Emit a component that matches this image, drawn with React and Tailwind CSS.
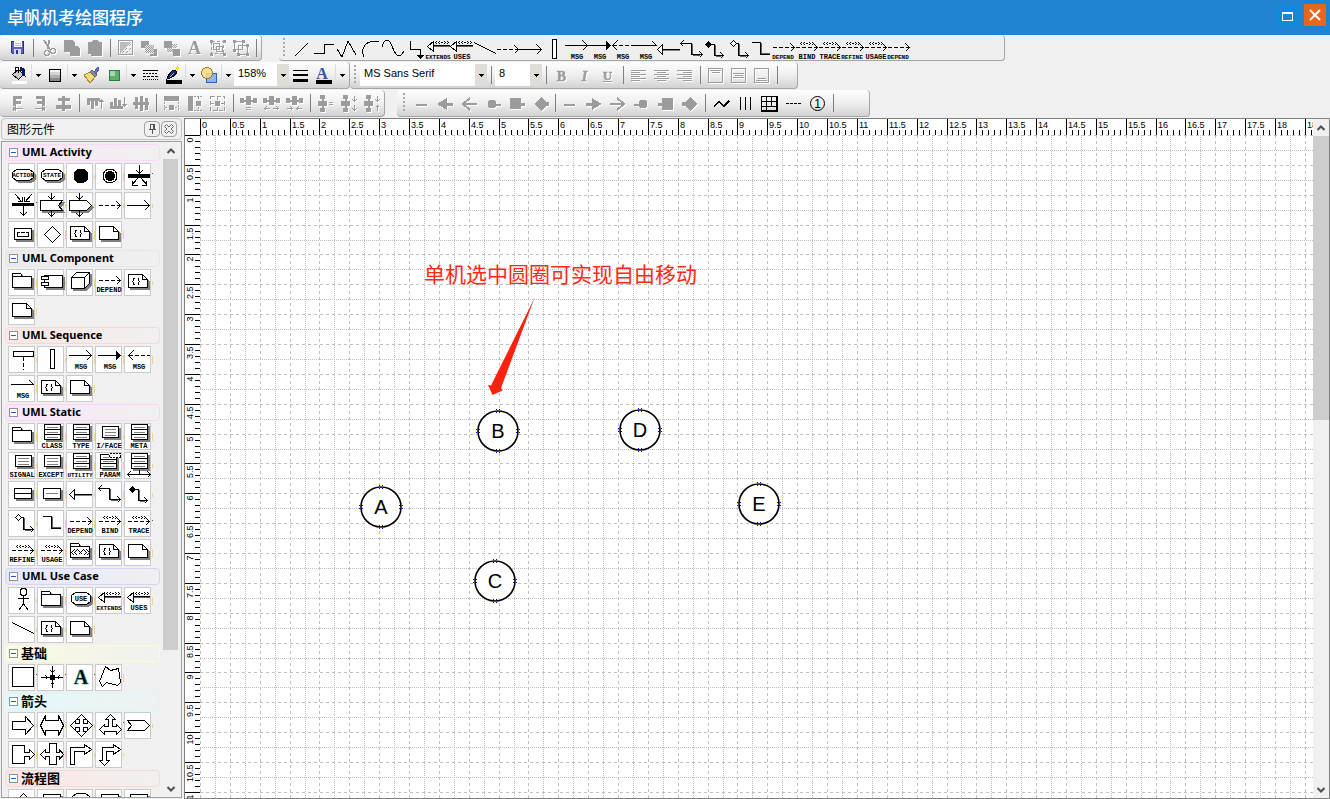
import React, { useLayoutEffect, useRef, useState } from "react";

const SHADOW = "#808080";
const UNIT = 59.72;

/* ---------- shape glyphs, drawn on a 25 x 25 field ---------- */

function Label({ children, y = 22, small }) {
  return (
    <text
      x={children.length > 5 && !small ? 13 : 14}
      y={y}
      textAnchor="middle"
      stroke="none"
      fill="#000"
      data-long={children.length > 5}
      className={
        children.length > 6 || small
          ? "font-['Liberation_Mono',monospace] text-[6px] font-bold"
          : "font-['Liberation_Mono',monospace] text-[7px] font-bold"
      }
    >
      {children}
    </text>
  );
}

function Shaded({ d }) {
  return (
    <>
      <path d={d} transform="translate(2 2)" fill={SHADOW} stroke={SHADOW} />
      <path d={d} fill="#fff" />
    </>
  );
}

const NOTE = "M3.5 4.5h14l5 5v8h-19z";
const note = (
  <>
    <Shaded d={NOTE} />
    <path d="M17.5 4.5v5h5" />
  </>
);
const noteBraces = (
  <>
    <Shaded d={NOTE} />
    <path d="M17.5 4.5v5h5M9.5 8.5h-1v2l-1 1 1 1v2h1M12.5 8.5h1v2l1 1-1 1v2h-1" />
  </>
);
const folder = (
  <>
    <Shaded d="M3.5 6.5v-3h8l2 3h9v11h-19z" />
    <path d="M3.5 6.5h10" />
  </>
);
const pill = "M7.5 5.5h13l4 3v5l-4 3h-13l-4-3v-5z";
const tallBox = (
  <>
    <Shaded d="M6.5 .5h16v15h-16z" />
    <path d="M6.5 5.5h16M6.5 10.5h16" />
    <path d="M9 3.5h11M9 8.5h11M9 13.5h11" stroke={SHADOW} />
  </>
);
const shortBox = (
  <>
    <Shaded d="M6.5 2.5h16v11h-16z" />
    <path d="M9 5.5h11M9 8.5h11M9 11.5h11" stroke={SHADOW} />
  </>
);

/* guillemets around a dash, dotted out one pixel at a time */
function Quill({ x, y }) {
  const dots = [[0, 1], [1, 0], [1, 2], [3, 1], [4, 0], [4, 2], [6, 1], [7, 1], [9, 0], [9, 2], [10, 1], [12, 0], [12, 2], [13, 1]];
  return <path stroke="none" fill="#000" d={dots.map(([a, b]) => `M${x + a} ${y + b}h1v1h-1z`).join("")} />;
}

const dashArrow = (y, head) => (
  <>
    <path d={`M3 ${y}h21`} strokeDasharray="4 2" />
    <path d={`M${24.5 - head} ${y - head}l${head} ${head}-${head} ${head}`} />
  </>
);
const solidArrow = (y) => <path d={`M2 ${y}h22M19.5 ${y - 5}l5 5-5 5`} />;
const quillArrow = (
  <>
    {dashArrow(10.5, 4)}
    <Quill x={7} y={5} />
  </>
);
const hollowLeft = (
  <>
    <path d="M8.5 8.5H25" />
    <path d="M8.5 9.5H25" stroke="#606060" />
    <path d="M2.5 9.5l6-5v10z" fill="#fff" />
    <Quill x={10} y={4} />
  </>
);

const GLYPHS = {
  action: (<><Shaded d={pill} /><Label small y={13}>ACTION</Label></>),
  state: (<><Shaded d={pill} /><Label small y={13}>STATE</Label></>),
  start: <circle cx="14" cy="12" r="7" fill="#000" />,
  end: (<><circle cx="14" cy="12" r="7" fill="#fff" /><circle cx="14" cy="12" r="5" fill="#000" stroke="none" /></>),
  fork: (<><path d="M3 10h22v4H3z" fill="#000" stroke="none" /><path d="M14.5 1v9M11.500 6.500l3 3 3-3M13 14l-6 7M7.500 16.500v5h5M16 14l6 7M21.500 16.500v5h-5" /></>),
  join: (<><path d="M3 10h22v3H3z" fill="#000" stroke="none" /><path d="M6 1l7 8M8.5 8.5h5v-5M23 1l-7 8M20.5 8.5h-5v-5M14.5 13v9M11.5 19.500l3 3 3-3" /></>),
  receive: (<><Shaded d="M2.5 7.5h22l-4 5 4 5h-22z" /><path d="M13.5 0v7M10.5 3.500l3 3 3-3M13.5 18v5M10.5 20.500l3 3 3-3" /></>),
  send: (<><Shaded d="M2.5 7.5h17l5 5-5 5h-17z" /><path d="M12.5 0v7M9.5 3.500l3 3 3-3M12.5 18v5M9.5 20.500l3 3 3-3" /></>),
  dashArrow: dashArrow(12.5, 4),
  solidArrow: solidArrow(12.5),
  lane: (<><Shaded d="M5.5 6.5h17v11h-17z" /><path d="M8.5 11v3.500h11V11M8 10.5h3M12 10.500h4M17 10.500h3" /></>),
  decision: <path d="M14.5 4.500l8 8-8 8-8-8z" fill="#fff" />,
  noteBraces,
  note,
  folder,
  component: (<><Shaded d="M6.5 5.5h18v12h-18z" /><path d="M3.5 6.5h7v3h-7zM3.500 12.5h7v3h-7z" fill="#fff" /></>),
  cube: (<><Shaded d="M4.5 7.5l5-5h13v11l-5 5h-13z" /><path d="M4.500 7.500h13v11M17.500 7.500l5-5" /></>),
  depend: (<>{dashArrow(10.5, 4)}<Label>DEPEND</Label></>),
  lifeline: (<><path d="M4.500 4.500h20v5h-20z" fill="#fff" /><path d="M14.500 10v13" strokeDasharray="4 2" /></>),
  activation: <path d="M12.500 2.500h4v19h-4z" fill="#fff" />,
  msg: (<>{solidArrow(8.5)}<Label>MSG</Label></>),
  msgFilled: (<><path d="M2 8.500h19" /><path d="M20.500 4.500l4 4-4 4z" fill="#000" /><Label>MSG</Label></>),
  msgBack: (<><path d="M4 8.500h21" strokeDasharray="4 2" /><path d="M8.500 3.500l-5 5 5 5" /><Label>MSG</Label></>),
  msgHalf: (<><path d="M2 8.500h22.500l-4-4" /><Label>MSG</Label></>),
  class: (<>{tallBox}<Label y={24}>CLASS</Label></>),
  type: (<>{tallBox}<Label y={24}>TYPE</Label></>),
  iface: (<>{shortBox}<Label y={24}>I/FACE</Label></>),
  meta: (<>{tallBox}<Label y={24}>META</Label></>),
  signal: (<>{shortBox}<Label y={24}>SIGNAL</Label></>),
  except: (<>{shortBox}<Label y={24}>EXCEPT</Label></>),
  utility: (<>{tallBox}<Label y={24}>UTILITY</Label></>),
  param: (<><Shaded d="M4.500 1.500h16v14h-16z" /><path d="M4.500 6.500h16M4.500 10.500h16" /><path d="M7 4.500h6M7 8.500h11M7 13.500h11" stroke={SHADOW} /><path d="M13.500 .5h11v4h-11z" fill="#fff" stroke="#fff" /><path d="M13.500 .5h11v4h-11z" strokeDasharray="2 1" /><Label y={24}>PARAM</Label></>),
  assocClass: (<>{tallBox}<path d="M14.500 17v4M3 21.500h22M5.500 18.500l-3 3 3 3M22.500 18.500l3 3-3 3" /></>),
  object: (<><Shaded d="M5.500 6.500h17v10h-17z" /><path d="M5.500 11.500h17" /></>),
  instance: (<><Shaded d="M5.500 6.500h17v10h-17z" /><path d="M8 11.500h12" stroke={SHADOW} /></>),
  generalize: (<><path d="M7 12.500h18" /><path d="M8 13.500h17" stroke={SHADOW} /><path d="M2.500 12.500l5-5v10z" fill="#fff" /></>),
  elbowBoth: (<><path d="M3 6.500h10.500v11H25M5.500 3.500l-3 3 3 3M21.500 14.500l3 3-3 3" /><path d="M14.500 7v10M15 18.500h7" stroke="#606060" /></>),
  elbowDiamond: (<><path d="M8 7.500h5.500v11H22M19.500 15.500l3 3-3 3" /><path d="M14.500 8v10M15 19.500h5" stroke="#606060" /><path d="M4.500 7.500l3-3 3 3-3 3z" fill="#000" /></>),
  elbowHollow: (<><path d="M9 6.500h5.500v12H24M21.500 15.500l3 3-3 3" /><path d="M15.500 7v11M16 19.500h6" stroke="#606060" /><path d="M6.500 6.500l3-3 3 3-3 3z" fill="#fff" /></>),
  elbow: (<><path d="M5 5.500h8.500v12H23" /><path d="M14.500 6v11M15 16.500h8" stroke="#606060" /></>),
  bind: (<>{quillArrow}<Label>BIND</Label></>),
  trace: (<>{quillArrow}<Label>TRACE</Label></>),
  refine: (<>{quillArrow}<Label>REFINE</Label></>),
  usage: (<>{quillArrow}<Label>USAGE</Label></>),
  package: (<>{folder}<path d="M7.500 9.500l-3 3 3 3M10.500 9.500l-3 3 3 3M11.500 10.500l4 4M15.500 10.500l-4 4M16.500 9.500l3 3-3 3M19.500 9.500l3 3-3 3" /></>),
  actor: (<><circle cx="14.500" cy="4" r="3.500" fill="#fff" /><path d="M14.500 8v8M9 10.500h11M14.500 16l-5 6.500M14.500 16l5 6.500" /></>),
  use: (<><Shaded d="M8.500 4.500h11l4 3v6l-4 3h-11l-4-3v-6z" /><Label y={13}>USE</Label></>),
  extends: (<>{hollowLeft}<Label>EXTENDS</Label></>),
  uses: (<>{hollowLeft}<Label>USES</Label></>),
  slope: <path d="M3 5.500l22 11" />,
  box: <path d="M3.500 2.500h21v19h-21z" fill="#fff" />,
  hub: (<><path d="M3 12.500h22M14.500 1v22M7.500 10.500l2 2-2 2M21.500 10.500l-2 2 2 2M12.500 5.500l2 2 2-2M12.500 19.500l2-2 2 2" /><circle cx="14.500" cy="12.500" r="2.500" fill="#000" /></>),
  letter: (<text x="14" y="19" textAnchor="middle" stroke="#008080" strokeWidth=".5" fill="#000" className="font-['Liberation_Serif',serif] text-[20px] font-bold">A</text>),
  freeform: <path d="M9.500 1.500l5 4 8-2 2 14-3 3-11-3-4 4-3-5z" fill="#fff" />,
  arrowRight: <path d="M3.500 8.500h13v-5l8 9-8 9v-5h-13z" />,
  arrowBoth: <path d="M2.500 12.500l5-10v5h13v-5l5 10-5 10v-5h-13v5z" />,
  arrowFour: <path d="M14.500 1.500l5 5h-3v4h4v-3l5 5-5 5v-3h-4v4h3l-5 5-5-5h3v-4h-4v3l-5-5 5-5v3h4v-4h-3z" />,
  arrowThree: <path d="M14.500 1.500l5 5h-3v7h4v-2l5 5-5 5v-3h-12v3l-5-5 5-5v2h4v-7h-3z" />,
  chevron: <path d="M2.500 7.500h17l5 5-5 5h-17l4-5z" />,
  callRight: <path d="M3.500 3.500h12v7h5v-3l5 5-5 5v-3h-5v7h-12z" />,
  callBoth: <path d="M11.500 1.500h7v9h3v-3l4 5-4 5v-3h-3v8h-7v-8h-4v3l-5-5 5-5v3h4z" />,
  bendRight: <path d="M3.500 22.500v-17h14v-3l7 5-7 5v-3h-10v13z" />,
  bendBoth: <path d="M6.500 5.500h11v-3l7 5-7 5v-3h-7v9h3l-5 5-5-5h3z" />,
  flowDiamond: <path d="M14.500 3.500l9 9-9 9-9-9z" />,
  flowBox: <Shaded d="M5.500 4.500h17v13h-17z" />,
  flowRound: <Shaded d="M9.500 3.500h9l4 3v8l-4 3h-9l-4-3v-8z" />,
  line: <path d="M7.500 19.500l13-13" />,
  step: <path d="M4 16.500h10.500v-9H24" />,
  zigzag: <path d="M4 12l5 8 6-16 8 14" />,
  arc: <path d="M8 20C4 11 10 2 23 5" />,
  wave: <path d="M3 10C5 1 10 1 13 9S20 24 25 14" />,
  elbowDown: (<><path d="M8.500 4v8.500h10V21" /><path d="M15.500 18.500h6l-3 3z" fill="#000" /></>),
};

function Glyph({ name, toolbar }) {
  return (
    <svg
      viewBox={toolbar ? "2 0 23 25" : "0 0 25 25"}
      className={
        toolbar
          ? "h-[25px] w-[23px] overflow-visible [&_text[data-long=true]]:text-[6px]"
          : "h-[25px] w-[25px] overflow-visible"
      }
      fill="none"
      stroke="#000"
      shapeRendering="crispEdges"
      aria-hidden="true"
    >
      {GLYPHS[name]}
    </svg>
  );
}

/* ---------- command icons, drawn on a 23 x 23 field ---------- */

const G = "#9c9c9c";

const distribute = (flip) => (
  <g transform={flip ? "matrix(0 1 1 0 0 0)" : undefined} stroke="none" fill={G}>
    <path d="M3 6h4v5H3zM9 4h5v9H9zM16 6h4v5h-4zM3 8h16v2H3z" />
  </g>
);

const ICONS = {
  save: (<><path d="M5.500 5.500h12v12h-11l-1-1z" fill="#5b63c4" stroke="#2d2f8f" /><path d="M8 5h8v6H8z" fill="#fff" stroke="none" /><path d="M9 7.500h6M9 9.500h6" stroke="#b8b8c8" /><path d="M8 13h7v5H8z" fill="#d6d8ee" stroke="none" /><path d="M10 14h2v4h-2z" fill="#2d2f8f" stroke="none" /></>),
  cut: (<><path d="M7 4l6 10M12 4l-1 9" strokeWidth="2" /><circle cx="10" cy="17" r="2.500" strokeWidth="1.500" /><circle cx="16" cy="15" r="2.500" strokeWidth="1.500" /></>),
  copy: <path d="M4 4h8l3 3v3h2l3 3v7H10v-4H4z" fill={G} stroke="none" />,
  paste: <path d="M5 6h3l2-2h4l2 2h3v14H8v-2H5z" fill={G} stroke="none" />,
  picture: (<><path d="M4.500 4.500h14v14h-14z" strokeWidth="1.500" /><path d="M6 6h11L6 17z" fill={G} fillOpacity=".65" stroke="none" /><path d="M8 17l9-9M12 17l5-5" strokeDasharray="1 1" /></>),
  front: (<><path d="M4 5h8v7H4zM13 13h7v7h-7z" fill={G} stroke="none" /><path d="M8 9h9v9H8z" fill="#e8e8e8" stroke="none" /><path d="M8 9.500h9M9 10.500h8M8 11.500h9M9 12.500h8M8 13.500h9M9 14.500h8M8 15.500h9M9 16.500h8" strokeDasharray="1 1" /></>),
  back: (<><path d="M4 5h8v7H4zM13 13h7v7h-7z" fill={G} stroke="none" /><path d="M12 8.500h5M13 9.500h4M12 10.500h5M13 11.500h4M7 12.500h5M8 13.500h5M7 14.500h5M8 15.500h5" strokeDasharray="1 1" /></>),
  text: (<text x="11.5" y="18" textAnchor="middle" fill={G} stroke="none" className="font-['Liberation_Serif',serif] text-[18px] font-bold">A</text>),
  group: (<><path d="M5.500 5.500h12v12h-12z" strokeDasharray="3 2" /><path d="M7.500 7.500h6v6h-6zM10.500 10.500h6v5h-6z" /><path d="M4 4h3v3H4zM17 4h3v3h-3zM4 17h3v3H4zM17 17h3v3h-3z" fill={G} stroke="none" /></>),
  ungroup: (<><path d="M5.500 5.500h8v8h-8zM9.500 9.500h9v9h-9z" /><path d="M4 4h3v3H4zM13 4h3v3h-3zM4 13h3v3H4zM8 17h3v3H8zM17 17h3v3h-3zM17 8h3v3h-3z" fill={G} stroke="none" /></>),
  fill: (<><path d="M4.500 10.500l6-5 5 5-5 5z" fill="#c8c8c8" stroke="#000" /><path d="M7.500 8V3.500h3V9" stroke="#000" /><path d="M12 4c4-1 5 2 5 8l-2-1c0-3-1-5-3-5z" fill="#0a1a6a" stroke="#0a1a6a" /><path d="M4 17h15v3H4z" fill="#fff" stroke="none" /></>),
  gradient: (<><path d="M6 5h11v3H6z" fill="#f6f6f6" stroke="none" /><path d="M6 8h11v3H6z" fill="#d4d4d4" stroke="none" /><path d="M6 11h11v3H6z" fill="#b0b0b0" stroke="none" /><path d="M6 14h11v4H6z" fill="#888" stroke="none" /><path d="M5.500 5.500h11v12h-11z" stroke="#000" /></>),
  brush: (<><path d="M4 11l6-3 5 5-5 6z" fill="#f3dc80" stroke="#a88a3a" /><path d="M10 8l2-2 5 5-2 2z" fill="#8a8a98" stroke="#666" /><path d="M14 8l4-5 1 2-3 5z" fill="#7080c8" stroke="#505aa0" /></>),
  swatch: (<><path d="M6.500 6.500h10v10h-10z" fill="#5fae6a" stroke="#2c7a3c" /><path d="M7 7h5v5H7z" fill="#a4d8a8" stroke="none" /></>),
  dashes: (<><path d="M4 6.500h15" stroke="#000" /><path d="M4 9.500h15" stroke="#000" strokeDasharray="2 1" /><path d="M4 12.500h15" stroke="#000" strokeDasharray="3 1" /><path d="M4 15.500h15" stroke="#000" strokeDasharray="1 1" /></>),
  pen: (<><path d="M5 15c2-6 5-9 8-9l2 2c-2 4-5 6-10 7z" fill="#1a2a7a" stroke="#000" /><path d="M8 13l4-4" stroke="#a0b0e0" /><path d="M13 6l2-4 2 1-1 4z" fill="#f4e400" stroke="none" /><path d="M4 16h16v4H4z" fill="#000" stroke="none" /></>),
  shapes: (<><path d="M8.500 9.500h10v9h-10z" fill="#8bb6f2" stroke="#2d62b8" /><circle cx="9" cy="9" r="5.500" fill="#f6dc85" fillOpacity=".85" stroke="#a07a20" /></>),
  weights: (<><path d="M4 6.500h15" stroke="#000" /><path d="M4 11h15" stroke="#000" strokeWidth="2" /><path d="M4 16.500h15" stroke="#000" strokeWidth="3" /></>),
  fontColor: (<><text x="10" y="15" textAnchor="middle" fill="#35549c" stroke="none" className="font-['Liberation_Serif',serif] text-[16px] font-bold">A</text><path d="M4 16h16v4H4z" fill="#000" stroke="none" /></>),
  bold: (<text x="11.5" y="17" textAnchor="middle" fill={G} stroke={G} strokeWidth=".5" className="font-['Liberation_Serif',serif] text-[14px] font-bold">B</text>),
  italic: (<text x="11.5" y="17" textAnchor="middle" fill={G} stroke={G} strokeWidth=".5" className="font-['Liberation_Serif',serif] text-[14px] font-bold italic">I</text>),
  underline: (<><text x="11.500" y="16" textAnchor="middle" fill={G} stroke={G} strokeWidth=".5" className="font-['Liberation_Serif',serif] text-[13px] font-bold">U</text><path d="M7 17.500h9" /></>),
  textLeft: <path d="M4 6.500h15M4 8.500h9M4 10.500h15M4 12.500h9M4 14.500h15M4 16.500h9" />,
  textCenter: <path d="M4 6.500h15M7 8.500h9M4 10.500h15M7 12.500h9M4 14.500h15M7 16.500h9" />,
  textRight: <path d="M4 6.500h15M10 8.500h9M4 10.500h15M10 12.500h9M4 14.500h15M10 16.500h9" />,
  boxTop: <path d="M4.500 4.500h14v14h-14zM6 6.500h11M8 8.500h8" />,
  boxMiddle: <path d="M4.500 4.500h14v14h-14zM6 9.500h11M8 11.500h8M6 13.500h11" />,
  boxBottom: <path d="M4.500 4.500h14v14h-14zM8 14.500h8M6 16.500h11" />,
  alignLeft: (<><path d="M7 4h9v3h-6v2h5v3h-5v2H7z" fill={G} stroke="none" /><path d="M7.500 15v4M8 16.500h9M10 14.500l-2 2 2 2" /></>),
  alignRight: (<><path d="M16 4H7v3h6v2H8v3h5v2h3z" fill={G} stroke="none" /><path d="M15.500 15v4M6 16.500h9M13 14.500l2 2-2 2" /></>),
  alignCenter: <path d="M10 4h3v2h5v3h-5v4h6v4h-6v2h-3v-2H4v-4h6V9H6V6h4z" fill={G} stroke="none" />,
  alignTop: (<><path d="M4 6h13v3h-2v5h-3V9h-1v8H8V9H7v4H4z" fill={G} stroke="none" /><path d="M18.500 8v9M16.500 10l2-2 2 2" /></>),
  alignBottom: (<><path d="M4 17h13v-3h-2V8h-3v6h-1V6H8v8H7v-4H4z" fill={G} stroke="none" /><path d="M18.500 5v9M16.500 12l2 2 2-2" /></>),
  alignMiddle: <path d="M4 10h2V5h3v5h2V4h3v6h2V6h3v4h1v3h-1v5h-3v-5h-2v6h-3v-6H9v4H6v-4H4z" fill={G} stroke="none" />,
  sameWidth: (<><path d="M4 4h15v5H4zM9 13h5v5H9z" fill={G} stroke="none" /><path d="M4.500 10v8M18.500 10v8M5 15.500h3M15 15.500h3" strokeDasharray="2 1" /></>),
  sameHeight: (<><path d="M5 4h5v15H5zM13 9h5v5h-5z" fill={G} stroke="none" /><path d="M11 4.500h8M11 18.500h8M15.500 5v3M15.500 15v3" strokeDasharray="2 1" /></>),
  sameSize: (<><path d="M4.500 4.500h14v14h-14z" strokeDasharray="4 2" /><path d="M9 9h5v5H9z" fill={G} stroke="none" /><path d="M11.500 4v4M11.500 15v4M4 11.500h4M15 11.500h4" /></>),
  spaceH: (<>{distribute(false)}<path d="M9 15.500h5M9 17.500h5" /></>),
  spaceHOut: (<>{distribute(false)}<path d="M4 16.500h6M6.500 14.500l-2 2 2 2M13 16.500h6M16.500 14.500l2 2-2 2" /></>),
  spaceHIn: (<>{distribute(false)}<path d="M4 16.500h6M7.500 14.500l2 2-2 2M13 16.500h6M15.500 14.500l-2 2 2 2" /></>),
  spaceV: (<>{distribute(true)}<path d="M15 10.500h4M15 12.500h4" /></>),
  spaceVOut: (<>{distribute(true)}<path d="M17.500 4v6M15.500 7.500l2 2 2-2M17.500 13v6M15.500 16.500l2 2 2-2" /></>),
  spaceVIn: (<>{distribute(true)}<path d="M17.500 4v6M15.500 7.500l2 2 2-2M17.500 13v6M15.500 15.500l2-2 2 2" /></>),
  plain: <path d="M6 13h11" strokeWidth="2" />,
  triL: <path d="M3 12l10-6v5h6v3h-6v4z" fill={G} stroke="none" />,
  openL: <path d="M19 12H5M12 6l-7 6 7 6" strokeWidth="2" />,
  dotL: (<><circle cx="10" cy="12" r="4" fill={G} /><path d="M12 13h7" strokeWidth="2" /></>),
  squareL: <path d="M4 6h11v5h4v3h-4v3H4z" fill={G} stroke="none" />,
  diamondL: <path d="M4 12l7-7 5 5h3v4h-3l-5 5z" fill={G} stroke="none" />,
  triR: <path d="M20 12l-10-6v5H4v3h6v4z" fill={G} stroke="none" />,
  openR: <path d="M4 12h14M11 6l7 6-7 6" strokeWidth="2" />,
  dotR: (<><circle cx="13" cy="12" r="4" fill={G} /><path d="M4 13h7" strokeWidth="2" /></>),
  squareR: <path d="M19 6H8v5H4v3h4v4h11z" fill={G} stroke="none" />,
  diamondR: <path d="M19 12l-7-7-5 5H4v4h3l5 5z" fill={G} stroke="none" />,
  polyline: <path d="M4 14l5-4 5 4 5-5" stroke="#000" strokeWidth="1.500" />,
  bars: <path d="M6.500 5v13M11.500 5v13M16.500 5v13" stroke="#000" />,
  table: (<><path d="M3.500 4.500h15v14h-15zM8.500 4v15M13.500 4v10M3 9.500h16M3 14.500h16" stroke="#000" /><path d="M19 4v15H3" stroke="#000" strokeWidth="2" /></>),
  dashed: <path d="M4 11.500h15" stroke="#000" strokeDasharray="3 1" />,
  numbered: (<><circle cx="11.500" cy="11.500" r="7" stroke="#000" shapeRendering="auto" /><text x="11.500" y="16" textAnchor="middle" fill="#000" stroke="none" className="font-['Liberation_Sans',sans-serif] text-[12px]">1</text></>),
};

function Tool({ name, wide, off }) {
  return (
    <button
      type="button"
      aria-label={name}
      className={`flex h-full shrink-0 items-center justify-center ${wide ? "w-6" : "w-[23px]"} ${
        off ? "[filter:drop-shadow(1px_1px_0_#fff)]" : ""
      }`}
    >
      <svg viewBox="0 0 23 23" className="h-[23px] w-[23px]" fill="none" stroke={G} shapeRendering="crispEdges" aria-hidden="true">
        {ICONS[name]}
      </svg>
    </button>
  );
}

function Tools({ names, wide, off }) {
  return names.split(" ").map((n) => <Tool key={n} name={n} wide={wide} off={off} />);
}

function Sep({ tight }) {
  return (
    <span className={`flex h-full shrink-0 items-center justify-center ${tight ? "w-1" : "w-2"}`}>
      <span className="h-[18px] w-px bg-[#808080]" />
    </span>
  );
}

function Caret() {
  return (
    <button type="button" aria-label="more" className="flex h-[22px] w-[13px] shrink-0 items-center justify-center border-l border-[#dcdcdc]">
      <svg viewBox="0 0 5 3" className="h-[3px] w-[5px]" shapeRendering="crispEdges"><path d="M0 0h5L2.500 3z" /></svg>
    </button>
  );
}

function Combo({ label, value, className }) {
  return (
    <label className={`relative flex h-[22px] shrink-0 self-center bg-white ${className}`}>
      <select
        aria-label={label}
        defaultValue={value}
        className="h-[18px] w-full appearance-none bg-transparent pl-1 font-['Liberation_Sans',sans-serif] text-[11px] leading-[18px] text-black outline-none"
      >
        <option>{value}</option>
      </select>
      <span className="pointer-events-none absolute inset-y-0 right-0 flex w-3 items-center justify-center bg-[#e0ddd8]">
        <svg viewBox="0 0 5 3" className="h-[3px] w-[5px]" shapeRendering="crispEdges"><path d="M0 0h5L2.500 3z" /></svg>
      </span>
    </label>
  );
}

function Bar({ children, className, flat, grip }) {
  return (
    <div
      className={`flex h-full shrink-0 items-center rounded-sm border-r border-b border-[#a6a6a6] ${
        flat ? "bg-[#efefef]" : "bg-linear-to-b from-[#fdfdfd] via-[#efefef] to-[#d2d2d2]"
      } ${className}`}
    >
      {grip && <span className="mr-1 ml-1 h-5 w-[2px] shrink-0 bg-[repeating-linear-gradient(to_bottom,#a8a8a8_0_2px,transparent_2px_4px)]" />}
      {children}
    </div>
  );
}

const SHAPE_BAR =
  "line step zigzag arc wave elbowDown extends uses slope dashArrow solidArrow activation msg msgFilled msgBack msgHalf generalize elbowBoth elbowDiamond elbowHollow elbow depend bind trace refine usage depend".split(" ");

function Toolbars() {
  return (
    <div className="flex shrink-0 flex-col gap-px overflow-hidden bg-[#f0f0f0] pb-px">
      <div className="flex h-[26px] gap-[17px]">
        <Bar className="pr-px pl-[6px]">
          <Tool name="save" />
          <Sep />
          <Tools off names="cut copy paste" />
          <Sep />
          <Tools off names="picture front back text group ungroup" />
          <Sep />
        </Bar>
        <Bar flat grip className="pr-[94px]">
          {SHAPE_BAR.map((n, i) => (
            <button key={i} type="button" aria-label={n} className="flex w-[23px] shrink-0 justify-center pt-[3px]">
              <Glyph name={n} toolbar />
            </button>
          ))}
        </Bar>
      </div>
      <div className="flex h-[27px]">
        <Bar className="pr-px pl-2">
          <Tool name="fill" /><Caret />
          <Tool name="gradient" /><Caret />
          <Tools names="brush swatch" /><Caret />
          <Tools names="dashes pen" /><Caret />
          <Tool name="shapes" /><Caret />
          <Combo label="Zoom" value="158%" className="w-[55px]" />
          <Tools names="weights fontColor" /><Caret />
        </Bar>
        <Bar grip className="pr-4">
          <Combo label="Font" value="MS Sans Serif" className="w-[127px]" />
          <Sep />
          <Combo label="Size" value="8" className="w-[47px]" />
          <Sep />
          <Tools off names="bold italic underline" />
          <Sep />
          <Tools off names="textLeft textCenter textRight" />
          <Sep />
          <Tools off names="boxTop boxMiddle boxBottom" />
          <Sep />
        </Bar>
      </div>
      <div className="flex h-[27px] gap-3">
        <Bar className="pr-px pl-[6px]">
          <Tools off names="alignLeft alignRight alignCenter" />
          <Sep />
          <Tools off names="alignTop alignBottom alignMiddle" />
          <Sep />
          <Tools off names="sameWidth sameHeight sameSize" />
          <Sep />
          <Tools off names="spaceH spaceHOut spaceHIn" />
          <Sep />
          <Tools off names="spaceV spaceVOut spaceVIn" />
        </Bar>
        <Bar grip className="pr-8 pl-[2px]">
          <Tools wide off names="plain triL openL dotL squareL diamondL" />
          <Sep tight />
          <Tools wide off names="plain triR openR dotR squareR diamondR" />
          <Sep />
          <Tools wide names="polyline bars table dashed numbered" />
          <Sep />
        </Bar>
      </div>
    </div>
  );
}

/* ---------- side panel ---------- */

/* marks: one letter per cell, the little tab to the right of it (l long, s short, d dot) */
const SECTIONS = [
  { title: "UML Activity", tint: "border-[#f9d8f9] from-[#fbe6fb]", marks: "slslddssssslll", items: "action state start end fork join receive send dashArrow solidArrow lane decision noteBraces note" },
  { title: "UML Component", tint: "border-[#e6e6e6] from-[#ebebeb]", marks: "lsllsl", items: "folder component cube depend noteBraces note" },
  { title: "UML Sequence", tint: "border-[#fbd6d4] from-[#fde6e4]", marks: "ssllllsl", items: "lifeline activation msg msgFilled msgBack msgHalf noteBraces note" },
  { title: "UML Static", tint: "border-[#f9d4f6] from-[#fbe6fa]", marks: "lllslslllsllslssllsdllsll", items: "folder class type iface meta signal except utility param assocClass object instance generalize elbowBoth elbowDiamond elbowHollow elbow depend bind trace refine usage package noteBraces note" },
  { title: "UML Use Case", tint: "border-[#d2d2fb] from-[#e6e6fa]", marks: "sllllssl", items: "actor folder use extends uses slope noteBraces note" },
  { title: "基础", cjk: true, tint: "border-[#fbfbd4] from-[#fbfbe2]", marks: "dddl", items: "box hub letter freeform" },
  { title: "箭头", cjk: true, tint: "border-[#d6f8f8] from-[#e2fafa]", marks: "sssdsllss", items: "arrowRight arrowBoth arrowFour arrowThree chevron callRight callBoth bendRight bendBoth" },
  { title: "流程图", cjk: true, tint: "border-[#fbd6d4] from-[#fde6e4]", marks: "", items: "flowDiamond flowBox flowRound flowBox flowBox" },
];

const MARKS = {
  l: "after:top-[9px] after:h-2 after:bg-[#f3d28b]",
  s: "after:top-[11px] after:h-1 after:bg-[#f3d28b]",
  d: "after:top-[9px] after:h-px after:bg-[#a04000]",
};

function Section({ title, tint, items, cjk, marks }) {
  return (
    <section className="shrink-0">
      <h2 className={`mb-[2px] flex h-[17px] items-center rounded-sm border bg-linear-to-r to-[#f0f0f0] ${tint}`}>
        <button type="button" aria-label={`Collapse ${title}`} className="ml-[3px] flex h-[9px] w-[9px] items-center justify-center border border-[#8a94a4] bg-white">
          <span className="h-px w-[5px] bg-[#2a5ad0]" />
        </button>
        <span
          className={
            cjk
              ? "ml-[3px] pb-[2px] font-['Noto_Sans_CJK_SC',sans-serif] text-[13px] leading-4 font-bold whitespace-nowrap"
              : "ml-1 pb-[2px] font-['Noto_Sans',sans-serif] text-[11px] leading-4 font-bold whitespace-nowrap"
          }
        >
          {title}
        </span>
      </h2>
      <div className="flex flex-wrap gap-[2px] pb-[2px] pl-[3px]">
        {items.split(" ").map((n, i) => (
          <button
            key={i}
            type="button"
            aria-label={n}
            className={`relative h-[27px] w-[27px] border border-[#cacaca] bg-white after:absolute after:-right-[3px] after:w-px after:content-[''] ${MARKS[marks[i]] || ""}`}
          >
            <Glyph name={n} />
          </button>
        ))}
      </div>
    </section>
  );
}

function ScrollBar({ thumb, className }) {
  return (
    <div className={`flex flex-col bg-[#f0f0f0] ${className}`}>
      <button type="button" aria-label="Scroll up" className="flex h-[17px] shrink-0 items-center justify-center">
        <svg viewBox="0 0 8 6" className="h-[6px] w-2" fill="none" stroke="#505050" strokeWidth="2"><path d="M.5 5L4 1.500 7.500 5" /></svg>
      </button>
      <div className="min-h-0 flex-1"><div className={`bg-[#cdcdcd] ${thumb}`} /></div>
      <button type="button" aria-label="Scroll down" className="flex h-[17px] shrink-0 items-center justify-center">
        <svg viewBox="0 0 8 6" className="h-[6px] w-2" fill="none" stroke="#505050" strokeWidth="2"><path d="M.5 1L4 4.500 7.500 1" /></svg>
      </button>
    </div>
  );
}

function Panel() {
  return (
    <aside className="flex w-[184px] shrink-0 flex-col bg-[#f0f0f0] pr-[2px] pb-px pl-px">
      <header className="mb-px flex h-[22px] shrink-0 items-center gap-px rounded-sm border border-[#c4c4c4] pr-1 pl-[5px]">
        <h1 className="flex-1 font-['Noto_Sans_CJK_SC',sans-serif] text-[12px] leading-5 text-black">图形元件</h1>
        <button type="button" aria-label="Pin" className="flex h-4 w-4 items-center justify-center rounded-sm border border-[#a0a0a0]">
          <svg viewBox="0 0 9 10" className="h-[10px] w-[9px]" fill="none" stroke="#555" shapeRendering="crispEdges"><path d="M2.500 1v4M6.500 1v4M2 .5h5M5.500 1v4M1 5.500h7M4.500 6v4" /></svg>
        </button>
        <button type="button" aria-label="Close panel" className="flex h-4 w-4 items-center justify-center rounded-sm border border-[#a0a0a0]">
          <svg viewBox="0 0 10 10" className="h-[10px] w-[10px]" fill="none" stroke="#666"><path d="M.5 2.500l2-2L5 3 7.500.5l2 2L7 5l2.500 2.500-2 2L5 7 2.500 9.500l-2-2L3 5z" /></svg>
        </button>
      </header>
      <div className="flex min-h-0 flex-1 gap-[3px] border border-[#a0a0a0] pr-[2px] pl-[3px]">
        <div className="flex w-[155px] flex-col overflow-hidden pt-[2px]">
          {SECTIONS.map((s) => <Section key={s.title} {...s} />)}
        </div>
        <ScrollBar thumb="h-[79%]" className="w-[15px]" />
      </div>
    </aside>
  );
}

/* ---------- drawing area ---------- */

function useSize() {
  const ref = useRef(null);
  const [size, setSize] = useState({ w: 0, h: 0 });
  useLayoutEffect(() => {
    const read = () => setSize({ w: ref.current.clientWidth, h: ref.current.clientHeight });
    read();
    const ro = new ResizeObserver(read);
    ro.observe(ref.current);
    return () => ro.disconnect();
  }, []);
  return [ref, size];
}

const steps = (length, size) => Array.from({ length: Math.max(0, Math.ceil(length / size)) }, (_, i) => i);
const at = (v) => Math.round(v) + 0.5;

function Ruler({ length, vertical }) {
  const depth = vertical ? 15 : 16;
  return (
    <svg className="block h-full w-full overflow-hidden bg-white" stroke="#000" shapeRendering="crispEdges">
      {steps(length, UNIT / 10).map((i) => {
        const p = at((i * UNIT) / 10);
        const from = i % 5 === 0 ? 0 : depth - 5;
        return vertical ? <path key={i} d={`M${from} ${p}H${depth}`} /> : <path key={i} d={`M${p} ${from}V${depth}`} />;
      })}
      {steps(length, UNIT / 2).map((i) => {
        const p = at((i * UNIT) / 2);
        const place = vertical
          ? { transform: `translate(8 ${p + 2}) rotate(-90)`, textAnchor: "end" }
          : { x: p + 1.5, y: 9 };
        return (
          <text key={i} {...place} stroke="none" fill="#000" className="font-['Liberation_Sans',sans-serif] text-[9px]">
            {i / 2}
          </text>
        );
      })}
    </svg>
  );
}

function Grid({ w, h }) {
  const q = UNIT / 4;
  return (
    <svg className="block h-full w-full" stroke="#c0c0c0" fill="none" shapeRendering="crispEdges" aria-hidden="true">
      {steps(w, q).map((i) => <path key={`x${i}`} d={`M${at(i * q)} 0V${h}`} strokeDasharray={i % 2 ? "1 1" : "3 3"} />)}
      {steps(h, q).map((i) => <path key={`y${i}`} d={`M0 ${at(i * q)}H${w}`} strokeDasharray={i % 2 ? "1 1" : "3 3"} />)}
    </svg>
  );
}

const NODES = [
  { id: "A", x: 181, y: 372 },
  { id: "B", x: 298, y: 296 },
  { id: "C", x: 295, y: 446 },
  { id: "D", x: 440, y: 295 },
  { id: "E", x: 559, y: 369 },
];

const PORTS = [[23, 3], [23, 43], [3, 23], [43, 23]];

function Node({ id, x, y }) {
  return (
    <div className="absolute flex h-[46px] w-[46px] items-center justify-center" style={{ left: x - 23, top: y - 23 }}>
      <svg viewBox="0 0 46 46" className="absolute inset-0" fill="none">
        <circle cx="23" cy="23" r="20" fill="#fff" stroke="#000" strokeWidth="1.600" />
        {PORTS.map(([px, py]) => (
          <path
            key={`${px}-${py}`}
            fill="#0000ff"
            shapeRendering="crispEdges"
            d={`M${px - 2} ${py - 2}h1v1h-1zM${px + 1} ${py - 2}h1v1h-1zM${px - 2} ${py + 1}h1v1h-1zM${px + 1} ${py + 1}h1v1h-1z`}
          />
        ))}
      </svg>
      <span className="relative font-['Liberation_Sans',sans-serif] text-[20px] leading-6 text-black">{id}</span>
    </div>
  );
}

function Canvas() {
  const [ref, { w, h }] = useSize();
  return (
    <main className="grid min-w-0 flex-1 grid-cols-[15px_minmax(0,1fr)_16px] grid-rows-[16px_minmax(0,1fr)] border border-[#808080] bg-white">
      <div className="bg-white" />
      <div className="overflow-hidden"><Ruler length={w} /></div>
      <ScrollBar thumb="h-[44%]" className="row-span-2" />
      <div className="overflow-hidden"><Ruler vertical length={h} /></div>
      <div ref={ref} className="relative overflow-hidden">
        <Grid w={w} h={h} />
        <p className="absolute top-[126px] left-[224px] font-['Noto_Sans_CJK_SC',sans-serif] text-[21px] leading-6 whitespace-nowrap text-[#ff2a14]">
          单机选中圆圈可实现自由移动
        </p>
        <svg viewBox="0 0 48 98" className="absolute top-[163px] left-[287px] h-[98px] w-12" fill="#ff2010">
          <path d="M47.500 0L14 90l1.500 2.500L5.500 97 1 87l3 .5z" />
        </svg>
        {NODES.map((n) => <Node key={n.id} {...n} />)}
      </div>
    </main>
  );
}

export default function App() {
  return (
    <div className="flex h-screen flex-col overflow-hidden bg-[#f0f0f0] text-black">
      <header className="flex h-[35px] shrink-0 items-center gap-[6px] bg-[#2083d2] pr-1 pl-[7px]">
        <p className="flex-1 pb-[2px] font-['Noto_Sans_CJK_SC',sans-serif] text-[17px] leading-6 font-medium text-white">卓帆机考绘图程序</p>
        <button type="button" aria-label="Maximize" className="mb-[3px] flex h-[22px] w-[22px] items-center justify-center bg-[#1289d8]">
          <svg viewBox="0 0 11 9" className="h-[9px] w-[11px]" fill="none" stroke="#fff" shapeRendering="crispEdges"><path d="M.5 .5h10v8H.5zM0 1.500h11" /></svg>
        </button>
        <button type="button" aria-label="Close" className="mb-[5px] flex h-[22px] w-[22px] items-center justify-center bg-[#e8661c]">
          <svg viewBox="0 0 12 12" className="h-3 w-3" fill="none" stroke="#fff" strokeWidth="2"><path d="M1 1l10 10M11 1L1 11" /></svg>
        </button>
      </header>
      <Toolbars />
      <div className="flex min-h-0 flex-1">
        <Panel />
        <Canvas />
      </div>
    </div>
  );
}
